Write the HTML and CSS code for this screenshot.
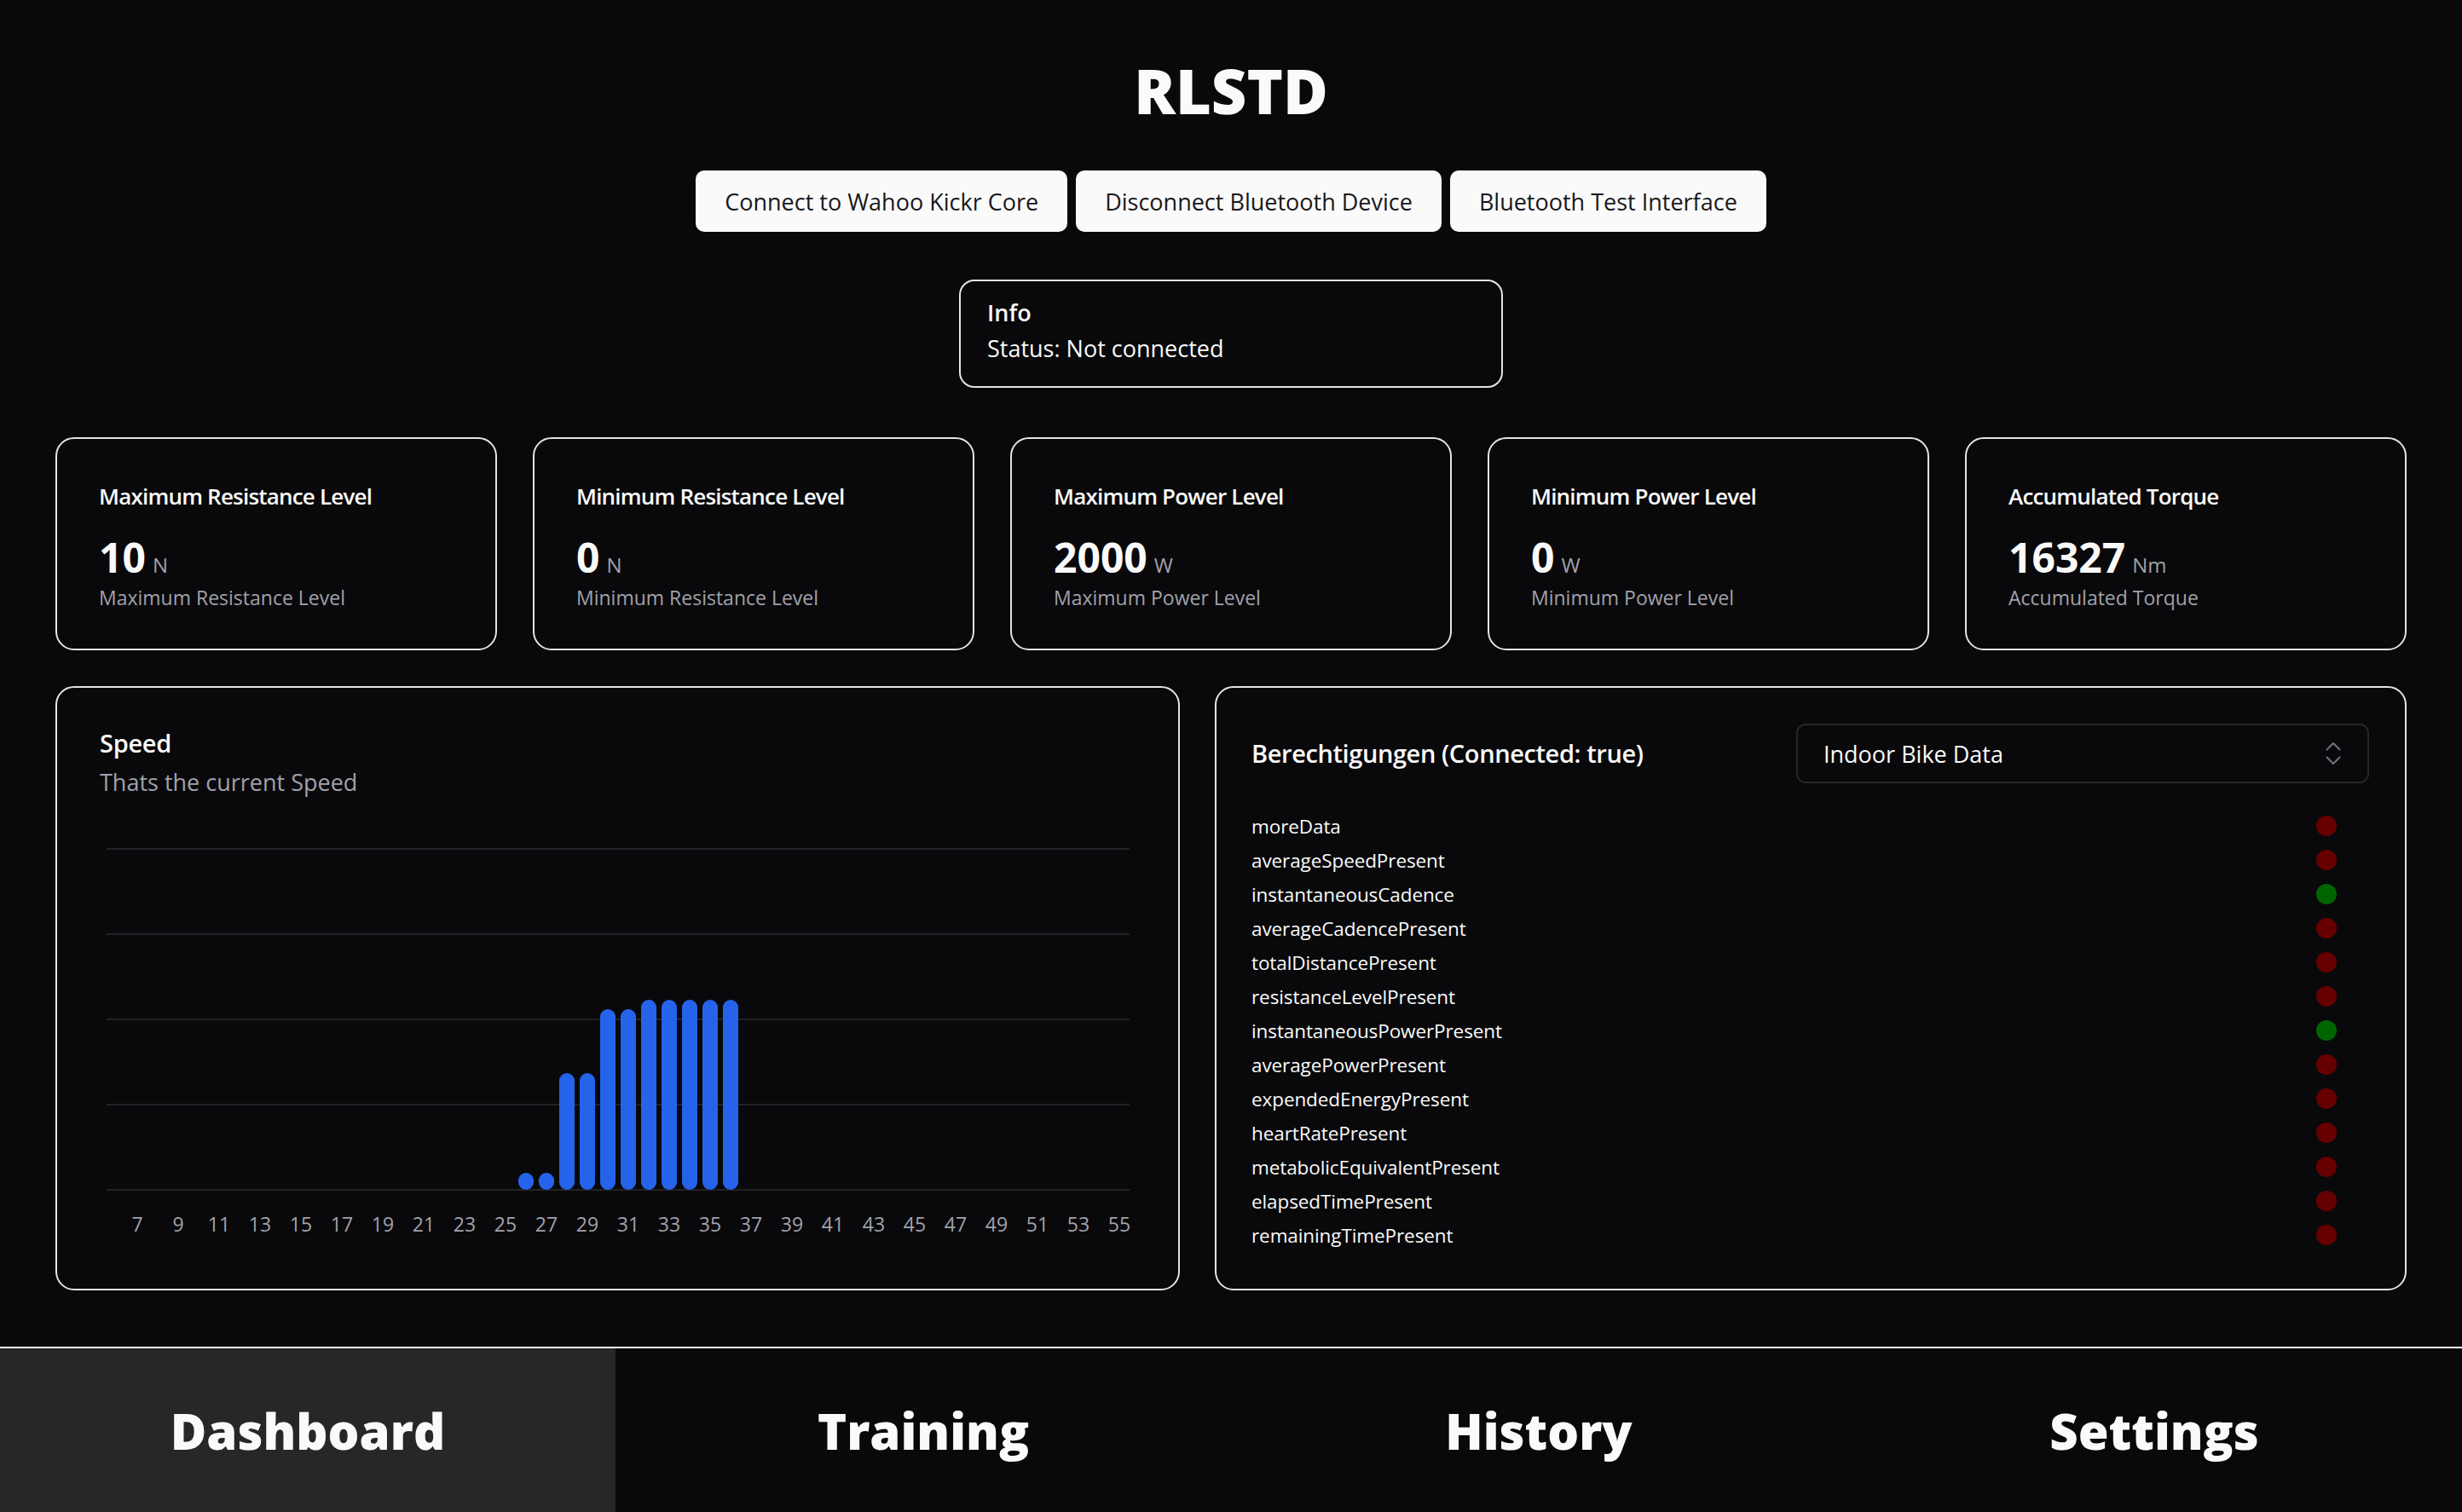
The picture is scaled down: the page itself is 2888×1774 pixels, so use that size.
FILE: index.html
```html
<!DOCTYPE html>
<html lang="en">
<head>
<meta charset="utf-8">
<title>RLSTD</title>
<link rel="stylesheet" href="styles.css">
</head>
<body>
<div class="app">
  <main class="main">
    <h1 class="title">RLSTD</h1>
    <div class="actions">
      <button class="btn">Connect to Wahoo Kickr Core</button>
      <button class="btn">Disconnect Bluetooth Device</button>
      <button class="btn">Bluetooth Test Interface</button>
    </div>
    <div class="info">
      <div class="info-title">Info</div>
      <div class="info-status">Status: Not connected</div>
    </div>
    <div class="stats">
      <div class="stat">
        <div class="stat-title">Maximum Resistance Level</div>
        <div class="stat-value"><span class="num">10</span><span class="unit">N</span></div>
        <div class="stat-sub">Maximum Resistance Level</div>
      </div>
      <div class="stat">
        <div class="stat-title">Minimum Resistance Level</div>
        <div class="stat-value"><span class="num">0</span><span class="unit">N</span></div>
        <div class="stat-sub">Minimum Resistance Level</div>
      </div>
      <div class="stat">
        <div class="stat-title">Maximum Power Level</div>
        <div class="stat-value"><span class="num">2000</span><span class="unit">W</span></div>
        <div class="stat-sub">Maximum Power Level</div>
      </div>
      <div class="stat">
        <div class="stat-title">Minimum Power Level</div>
        <div class="stat-value"><span class="num">0</span><span class="unit">W</span></div>
        <div class="stat-sub">Minimum Power Level</div>
      </div>
      <div class="stat">
        <div class="stat-title">Accumulated Torque</div>
        <div class="stat-value"><span class="num">16327</span><span class="unit">Nm</span></div>
        <div class="stat-sub">Accumulated Torque</div>
      </div>
    </div>
    <div class="panels">
      <section class="card speed">
        <div class="card-title">Speed</div>
        <div class="card-sub">Thats the current Speed</div>
        <svg class="chart" width="1215" height="480" viewBox="0 0 1215 480">
          <g class="grid">
            <line x1="8" x2="1208" y1="6" y2="6"/>
            <line x1="8" x2="1208" y1="106" y2="106"/>
            <line x1="8" x2="1208" y1="206" y2="206"/>
            <line x1="8" x2="1208" y1="306" y2="306"/>
            <line x1="8" x2="1208" y1="406" y2="406"/>
          </g>
          <g class="bars">
            <rect x="491" y="386" width="18" height="20" rx="9"/>
            <rect x="515" y="386" width="18" height="20" rx="9"/>
            <rect x="539" y="269" width="18" height="137" rx="9"/>
            <rect x="563" y="269" width="18" height="137" rx="9"/>
            <rect x="587" y="194" width="18" height="212" rx="9"/>
            <rect x="611" y="194" width="18" height="212" rx="9"/>
            <rect x="635" y="183" width="18" height="223" rx="9"/>
            <rect x="659" y="183" width="18" height="223" rx="9"/>
            <rect x="683" y="183" width="18" height="223" rx="9"/>
            <rect x="707" y="183" width="18" height="223" rx="9"/>
            <rect x="731" y="183" width="18" height="223" rx="9"/>
          </g>
          <g class="ticks">
            <text x="44" y="455">7</text>
            <text x="92" y="455">9</text>
            <text x="140" y="455">11</text>
            <text x="188" y="455">13</text>
            <text x="236" y="455">15</text>
            <text x="284" y="455">17</text>
            <text x="332" y="455">19</text>
            <text x="380" y="455">21</text>
            <text x="428" y="455">23</text>
            <text x="476" y="455">25</text>
            <text x="524" y="455">27</text>
            <text x="572" y="455">29</text>
            <text x="620" y="455">31</text>
            <text x="668" y="455">33</text>
            <text x="716" y="455">35</text>
            <text x="764" y="455">37</text>
            <text x="812" y="455">39</text>
            <text x="860" y="455">41</text>
            <text x="908" y="455">43</text>
            <text x="956" y="455">45</text>
            <text x="1004" y="455">47</text>
            <text x="1052" y="455">49</text>
            <text x="1100" y="455">51</text>
            <text x="1148" y="455">53</text>
            <text x="1196" y="455">55</text>
          </g>
        </svg>
      </section>
      <section class="card perms">
        <div class="perms-head">
          <div class="card-title perms-title">Berechtigungen (Connected: true)</div>
          <div class="select">
            <span>Indoor Bike Data</span>
            <svg class="chev" width="36" height="36" viewBox="0 0 24 24" fill="none" stroke="currentColor" stroke-width="1.4" stroke-linecap="round" stroke-linejoin="round"><path d="m7 15 5 5 5-5"/><path d="m7 9 5-5 5 5"/></svg>
          </div>
        </div>
        <ul class="flags">
          <li><span>moreData</span><i class="dot off"></i></li>
          <li><span>averageSpeedPresent</span><i class="dot off"></i></li>
          <li><span>instantaneousCadence</span><i class="dot on"></i></li>
          <li><span>averageCadencePresent</span><i class="dot off"></i></li>
          <li><span>totalDistancePresent</span><i class="dot off"></i></li>
          <li><span>resistanceLevelPresent</span><i class="dot off"></i></li>
          <li><span>instantaneousPowerPresent</span><i class="dot on"></i></li>
          <li><span>averagePowerPresent</span><i class="dot off"></i></li>
          <li><span>expendedEnergyPresent</span><i class="dot off"></i></li>
          <li><span>heartRatePresent</span><i class="dot off"></i></li>
          <li><span>metabolicEquivalentPresent</span><i class="dot off"></i></li>
          <li><span>elapsedTimePresent</span><i class="dot off"></i></li>
          <li><span>remainingTimePresent</span><i class="dot off"></i></li>
        </ul>
      </section>
    </div>
  </main>
  <nav class="tabs">
    <a class="tab active">Dashboard</a>
    <a class="tab">Training</a>
    <a class="tab">History</a>
    <a class="tab">Settings</a>
  </nav>
</div>
</body>
</html>
```
FILE: styles.css
```css
* { box-sizing: border-box; }
html, body { margin: 0; padding: 0; }
body {
  background: #09090b;
  color: #fafafa;
  font-family: "Open Sans", "Noto Sans", sans-serif;
}
.app {
  height: 1774px;
  display: flex;
  flex-direction: column;
}
.main {
  flex: 1;
  display: flex;
  flex-direction: column;
  align-items: center;
  padding: 70px 65px 0;
}
.title {
  margin: 0;
  font-size: 72px;
  line-height: 72px;
  font-weight: 800;
}
.actions {
  margin-top: 58px;
  display: flex;
  gap: 10px;
}
.btn {
  height: 72px;
  padding: 0 34px;
  border: 0;
  border-radius: 10px;
  background: #fafafa;
  color: #18181b;
  font-family: inherit;
  font-size: 27px;
  font-weight: 500;
}
.info {
  margin-top: 56px;
  width: 638px;
  height: 127px;
  border: 2px solid #e4e4e7;
  border-radius: 18px;
  padding: 16px 31px 0;
  font-size: 27px;
  line-height: 42px;
}
.info-title { font-weight: 600; }
.stats {
  margin-top: 58px;
  align-self: stretch;
  display: grid;
  grid-template-columns: repeat(5, 1fr);
  gap: 42px;
}
.stat {
  height: 250px;
  border: 2px solid #e4e4e7;
  border-radius: 22px;
  padding: 49px 49px 0;
}
.stat-title {
  font-size: 26px;
  line-height: 36px;
  font-weight: 600;
  letter-spacing: -0.8px;
}
.stat-value {
  margin-top: 26px;
  line-height: 56px;
  display: flex;
  align-items: baseline;
}
.num { font-size: 48px; font-weight: 700; }
.unit { font-size: 24px; color: #a1a1aa; margin-left: 8px; }
.stat-sub {
  margin-top: -6px;
  font-size: 23px;
  line-height: 32px;
  color: #a1a1aa;
}
.panels {
  margin-top: 42px;
  align-self: stretch;
  display: grid;
  grid-template-columns: 1319px 1fr;
  gap: 41px;
}
.card {
  height: 709px;
  border: 2px solid #e4e4e7;
  border-radius: 22px;
}
.speed { padding: 45px 50px 0; }
.card-title {
  font-size: 29px;
  line-height: 40px;
  font-weight: 600;
  letter-spacing: -0.3px;
}
.perms-title { letter-spacing: -0.4px; }
.card-sub {
  margin-top: 7px;
  font-size: 27px;
  line-height: 38px;
  color: #a1a1aa;
}
.chart {
  display: block;
  margin-top: 53px;
}
.grid line { stroke: #222226; stroke-width: 2; }
.bars rect { fill: #2563eb; }
.ticks text {
  fill: #a1a1aa;
  font-size: 23px;
  font-family: "Open Sans", "Noto Sans", sans-serif;
  text-anchor: middle;
}
.perms { padding: 42px 42px 0 41px; }
.perms-head {
  height: 70px;
  display: flex;
  align-items: center;
  justify-content: space-between;
}
.select {
  width: 672px;
  height: 70px;
  border: 2px solid #27272a;
  border-radius: 11px;
  padding: 0 22px 0 30px;
  display: flex;
  align-items: center;
  justify-content: space-between;
  font-size: 27px;
}
.chev { color: #71717a; }
.flags {
  list-style: none;
  margin: 30px 0 0;
  padding: 0;
}
.flags li {
  height: 40px;
  display: flex;
  align-items: center;
  justify-content: space-between;
  padding-right: 38px;
  font-size: 22.5px;
  letter-spacing: -0.1px;
}
.dot {
  width: 24px;
  height: 24px;
  border-radius: 50%;
}
.dot.off { background: #660000; }
.dot.on { background: #006400; }
.tabs {
  height: 194px;
  border-top: 2px solid #fafafa;
  display: grid;
  grid-template-columns: repeat(4, 1fr);
}
.tab {
  display: flex;
  align-items: center;
  justify-content: center;
  font-size: 58px;
  font-weight: 800;
  color: #fafafa;
}
.tab.active { background: #27272a; }
```
